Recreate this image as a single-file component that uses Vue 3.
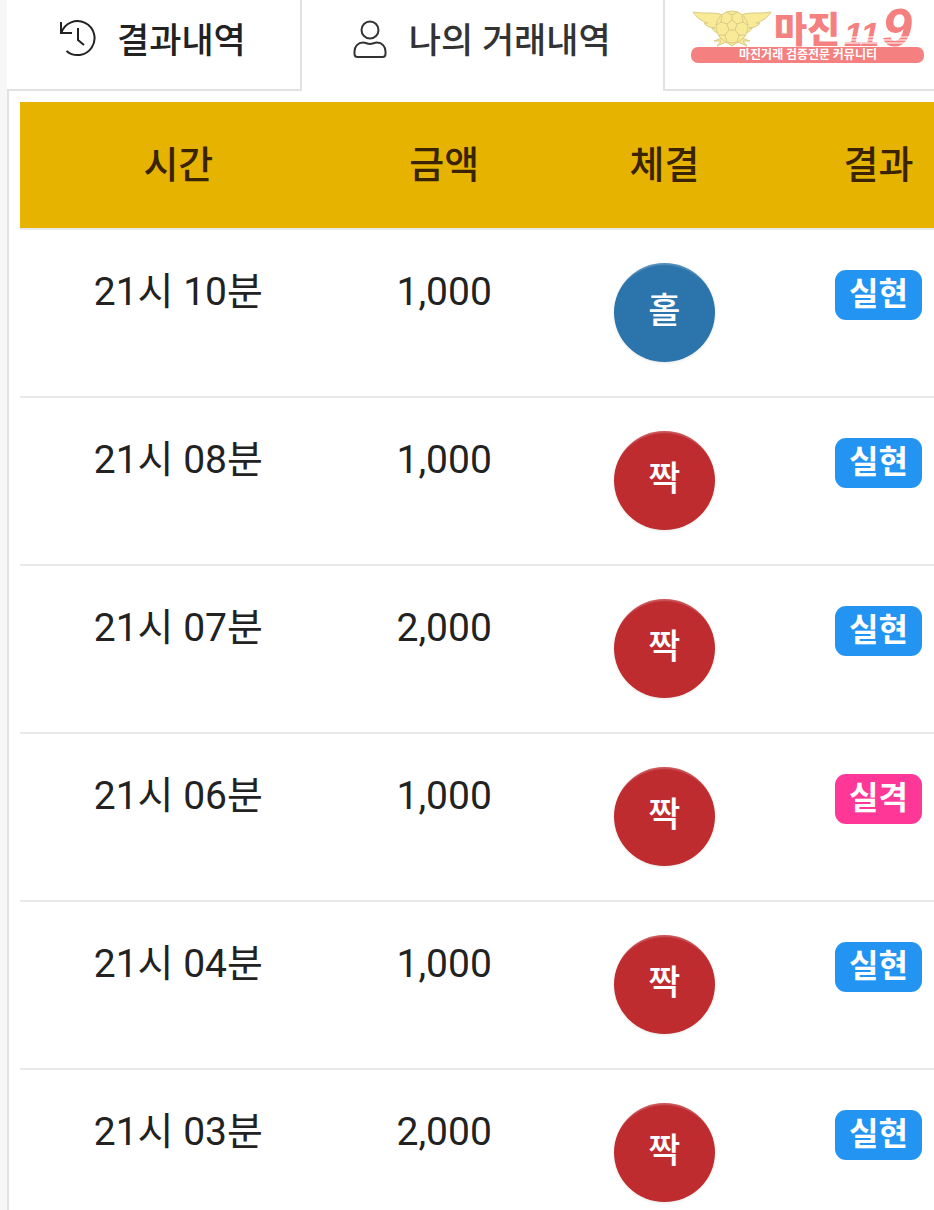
<template>
  <div class="page">
    <nav class="tabs">
      <button type="button" class="tab" :class="{ active: tab === 'result' }" @click="tab = 'result'">
        <svg class="tab-icon" viewBox="0 0 38 38" fill="none" stroke="currentColor" stroke-width="2">
          <path d="M2 2v11h11" />
          <path d="M2.500 12.500A17 17 0 1 1 7.500 31" />
          <path d="M19 8v12l6 5" />
        </svg>
        <span class="tab-label">결과내역</span>
      </button>
      <button type="button" class="tab tab-mine" :class="{ active: tab === 'mine' }" @click="tab = 'mine'">
        <svg class="tab-icon" viewBox="0 0 38 38" fill="none" stroke="currentColor" stroke-width="2">
          <circle cx="19" cy="10" r="8.500" />
          <path d="M12 22.500c3 0 4 1.500 7 1.500s4-1.500 7-1.500c5 0 8.500 4 8.500 9v2.500c0 2-1 3-3 3h-25c-2 0-3-1-3-3v-2.500c0-5 3.500-9 8.500-9z" />
        </svg>
        <span class="tab-label">나의 거래내역</span>
      </button>
      <div class="tab-rest">
        <svg class="logo" viewBox="0 0 234 56" role="img" aria-label="마진119">
          <g fill="#f8ea96" stroke="#d9cb85" stroke-width="1">
            <path d="M2 4c10 2 19 0 27 2 4 1 7 5 9 8l-5 12c-6 0-10-2-12-6h3c-5 0-9-2-11-5h4C10 13 5 9 2 4z" />
            <path d="M80 4c-10 2-19 0-27 2-4 1-7 5-9 8l5 12c6 0 10-2 12-6h-3c5 0 9-2 11-5h-4c7-2 12-6 15-11z" />
            <path d="M31 30l-8 3 7 0-4 5 9-4 6 4 6-4 9 4-4-5 7 0-8-3z" />
            <circle cx="41" cy="19" r="16" />
            <path fill="none" d="M36 16l5-4 5 4-2 6h-6zM41 12V7l-6-3M41 7l6-3M36 16l-6-2-4 3M30 14l1-6M46 16l6-2 4 3M52 14l-1-6M38 22l-4 5-6 0M34 27l2 7M44 22l4 5 6 0M48 27l-2 7" />
          </g>
          <g fill="#f58080">
            <text class="logo-name" x="83" y="35">마진</text>
            <text class="logo-num" x="153" y="38" font-size="34">11</text>
            <text class="logo-num" x="191" y="38" font-size="54">9</text>
            <rect x="0" y="39" width="233" height="16" rx="7" />
          </g>
          <path d="M152 29h72M152 32h72M152 35h72" stroke="#fff" stroke-width="1" />
          <text class="logo-sub" x="117" y="51" text-anchor="middle" fill="#fff">마진거래 검증전문 커뮤니티</text>
        </svg>
      </div>
    </nav>

    <div class="panel">
      <table class="trades">
        <thead>
          <tr>
            <th class="col-time">시간</th>
            <th class="col-amount">금액</th>
            <th class="col-pick">체결</th>
            <th class="col-result">결과</th>
          </tr>
        </thead>
        <tbody>
          <tr v-for="row in rows" :key="row.time">
            <td>{{ row.time }}</td>
            <td>{{ row.amount }}</td>
            <td>
              <span class="ball" :class="row.pick === '홀' ? 'odd' : 'even'">{{ row.pick }}</span>
            </td>
            <td>
              <span class="badge" :class="{ lose: row.result === '실격' }">{{ row.result }}</span>
            </td>
          </tr>
        </tbody>
      </table>
    </div>
  </div>
</template>

<script setup>
import { ref } from 'vue'

const tab = ref('mine')

const rows = [
  { time: '21시 10분', amount: '1,000', pick: '홀', result: '실현' },
  { time: '21시 08분', amount: '1,000', pick: '짝', result: '실현' },
  { time: '21시 07분', amount: '2,000', pick: '짝', result: '실현' },
  { time: '21시 06분', amount: '1,000', pick: '짝', result: '실격' },
  { time: '21시 04분', amount: '1,000', pick: '짝', result: '실현' },
  { time: '21시 03분', amount: '2,000', pick: '짝', result: '실현' }
]
</script>

<style>
body {
  margin: 0;
  background: #f7f7f7;
}
</style>

<style scoped>
.page {
  box-sizing: border-box;
  display: flex;
  flex-direction: column;
  height: 100vh;
  padding-left: 7px;
  overflow: hidden;
  font-family: Roboto, "Noto Sans CJK KR", sans-serif;
  color: #222;
}

.tabs {
  display: flex;
  flex: none;
  height: 91px;
  background: #fff;
}

.tab {
  box-sizing: border-box;
  display: flex;
  align-items: center;
  gap: 20px;
  padding: 0 54px 12px 52px;
  border: 0 solid #e2e2e2;
  border-bottom-width: 2px;
  background: #fff;
  color: #222;
  font-family: inherit;
  font-size: 35px;
  font-weight: 500;
  line-height: 52px;
  white-space: nowrap;
  cursor: pointer;
}

.tab:first-child {
  border-right-width: 2px;
}

.tab-mine {
  padding: 0 52px 12px 49px;
  color: #333;
}

.tab.active {
  border-bottom-color: #fff;
}

.tab-label {
  padding-top: 6px;
}

.tab-icon {
  flex: none;
  width: 38px;
  height: 38px;
}

.tab-rest {
  box-sizing: border-box;
  flex: 1;
  padding: 8px 0 0 26px;
  border-left: 2px solid #e2e2e2;
  border-bottom: 2px solid #e2e2e2;
}

.logo {
  display: block;
  width: 234px;
  height: 56px;
  overflow: visible;
}

.logo-name {
  font-family: "Noto Sans CJK KR", sans-serif;
  font-size: 36px;
  font-weight: 900;
}

.logo-num {
  font-family: "Liberation Sans", sans-serif;
  font-style: italic;
  font-weight: 700;
}

.logo-sub {
  font-family: "Noto Sans CJK KR", sans-serif;
  font-size: 12px;
  font-weight: 700;
}

.panel {
  flex: 1;
  min-height: 0;
  padding: 11px 0 0 11px;
  border-left: 2px solid #e2e2e2;
  background: #fff;
}

/* the last column runs past the right edge of the window */
.trades {
  width: 105%;
  table-layout: fixed;
  border-spacing: 0;
  text-align: center;
}

.col-time {
  width: 33%;
}

.col-amount {
  width: 22.4%;
}

.col-pick {
  width: 23.5%;
}

.col-result {
  width: 21.1%;
}

.trades th {
  box-sizing: border-box;
  height: 128px;
  padding: 0 0 8px;
  border-bottom: 2px solid #e9e9e9;
  background: #e6b400;
  background-clip: padding-box;
  color: #3a2400;
  font-size: 38px;
  font-weight: 500;
}

.trades td {
  height: 99px;
  padding: 33px 0 34px;
  border-bottom: 2px solid #e9e9e9;
  font-size: 39px;
  line-height: 58px;
  vertical-align: top;
  white-space: nowrap;
}

.ball {
  display: block;
  width: 101px;
  height: 99px;
  margin: 0 auto;
  border-radius: 50%;
  box-shadow: inset 0 4px 1px -2px rgba(255, 255, 255, 0.2), 0 1px 3px rgba(0, 0, 0, 0.1);
  color: #fff;
  font-size: 35px;
  font-weight: 500;
  line-height: 98px;
}

.odd {
  background: #2b74ac;
}

.even {
  background: #bf2c2f;
}

.badge {
  display: block;
  width: 87px;
  height: 50px;
  margin: 7px auto 0;
  border-radius: 11px;
  background: #2494f2;
  color: #fff;
  font-size: 32px;
  font-weight: 700;
  line-height: 48px;
}

.badge.lose {
  background: #ff3797;
}
</style>
